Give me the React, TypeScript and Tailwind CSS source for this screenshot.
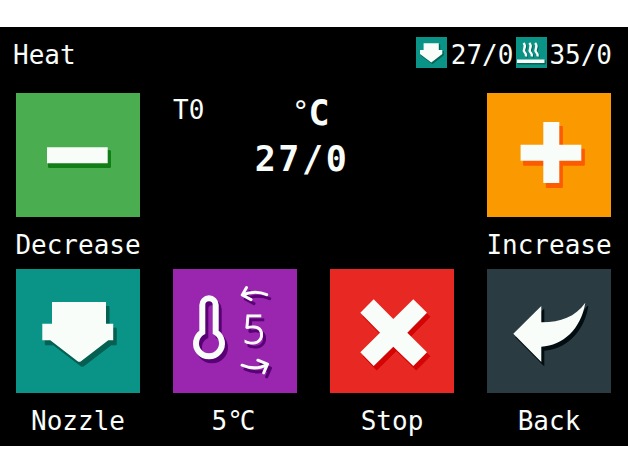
import type { ReactNode } from 'react';

const MONO = "font-['DejaVu_Sans_Mono','Liberation_Mono',monospace]";

function Shape({ d, shadow, dx = 3, dy = 4.5 }: { d: string; shadow: string; dx?: number; dy?: number }) {
  return (
    <>
      <path d={d} fill={shadow} stroke={shadow} strokeWidth="1" strokeLinejoin="round" transform={`translate(${dx} ${dy})`} />
      <path d={d} fill="#f8fdfa" />
    </>
  );
}

function Tile({ label, color, children }: { label: ReactNode; color: string; children: ReactNode }) {
  return (
    <button className="flex w-[124px] flex-col items-center">
      <svg viewBox="0 0 124 124" className={`block h-[124px] w-[124px] ${color}`}>
        {children}
      </svg>
      <span className="mt-[12px] h-[31px] whitespace-nowrap leading-[32px]">{label}</span>
    </button>
  );
}

function ThermometerArt() {
  return (
    <>
      <path d="M29.3 63.2V36A6.7 6.7 0 0 1 42.7 36V63.2A13 13 0 1 1 29.3 63.2Z" strokeWidth="6" />
      <g strokeWidth="3" strokeLinecap="round" strokeLinejoin="round">
        <path d="M73.5 18.6 69.3 26 78 30.6M69.3 26Q82 20.5 93.7 25.6" />
        <path d="M69 96.2Q83 102 94.5 95.2M84.8 91.2 94.5 95.2 90.7 103.8" />
      </g>
    </>
  );
}

function SmallNozzle() {
  return (
    <svg viewBox="0 0 31 31" className="h-[31px] w-[31px] bg-[#0a9488]">
      <Shape d="M7.6 6.3H22.8V13H26.3V17L15.3 25.4 4 17V13H7.6Z" shadow="#056355" dx={1} dy={1.3} />
    </svg>
  );
}

function SmallBed() {
  const waves = 'M7.5 6C11.5 10 6 12 8.5 15Q10.5 17 10 19.5M13.3 6C17.3 10 11.8 12 14.3 15Q16.3 17 15.8 19.5M19.1 6C23.1 10 17.6 12 20.1 15Q22.1 17 21.6 19.5';
  return (
    <svg viewBox="0 0 31 31" className="h-[31px] w-[31px] bg-[#0a9488]">
      <path d={waves} fill="none" stroke="#056355" strokeWidth="2.2" transform="translate(1 1)" />
      <path d={waves} fill="none" stroke="#f8fdfa" strokeWidth="2.4" />
      <Shape d="M1 22.5H28.5V26H1Z" shadow="#056355" dx={0.8} dy={1} />
    </svg>
  );
}

export default function App() {
  return (
    <div className={`flex h-[472px] w-[628px] flex-col bg-white text-[26px] text-[#f8fdfa] ${MONO}`}>
      <div className="mt-[27px] h-[419px] bg-black">
        <header className="flex h-[66px] items-start justify-between pl-[13px] pr-[16px] pt-[10px]">
          <h1 className="mt-[2px] leading-[32px]">Heat</h1>
          <div className="flex items-start">
            <SmallNozzle />
            <span className="ml-[3.5px] mr-[2.5px] mt-[2px] leading-[32px]">27/0</span>
            <SmallBed />
            <span className="ml-[2.5px] mt-[2px] leading-[32px]">35/0</span>
          </div>
        </header>
        <main className="ml-[16px] grid w-[595px] grid-cols-4 gap-x-[33px]">
          <Tile label="Decrease" color="bg-[#4aae51]">
            <rect x="32" y="57" width="63" height="18" rx="1.5" fill="#117e17" />
            <path d="M31 54.3H91.7V70.3H31Z" fill="#f8fdfa" />
          </Tile>
          <section className="col-span-2 flex items-start">
            <span className="mt-px w-[32px] leading-[32px]">T0</span>
            <div className="ml-[49px] flex w-[96px] flex-col items-center text-[35px] font-bold tracking-[2.6px]">
              <span className="ml-[20px] flex h-[45px] whitespace-nowrap leading-[40px]">
                <span className="text-[29px] font-normal leading-[36px] tracking-[-1px]">°</span>
                <span>C</span>
              </span>
              <span className="whitespace-nowrap leading-[42px]">27/0</span>
            </div>
          </section>
          <Tile label="Increase" color="bg-[#fa9a00]">
            <Shape d="M56.3 29H72.3V51.7H94.3V67.7H72.3V90H56.3V67.7H33.6V51.7H56.3Z" shadow="#fc5b00" />
          </Tile>
        </main>
        <footer className="ml-[16px] mt-[9px] grid w-[595px] grid-cols-4 gap-x-[33px]">
          <Tile label="Nozzle" color="bg-[#0a9488]">
            <Shape d="M36 33H90V54.7H97.2V71.3H92.3L65 92.2Q63.3 93.5 61.6 92.2L34.3 71.3H26.3V54.7H36Z" shadow="#056052" />
          </Tile>
          <Tile
            color="bg-[#9a26b0]"
            label={
              <>
                5<span className="tracking-[-3px]">°</span>
                <span className="tracking-[3px]">C</span>
              </>
            }
          >
            <g transform="translate(3 4)" fill="none" stroke="#580074">
              <ThermometerArt />
            </g>
            <g fill="none" stroke="#f8fdfa">
              <ThermometerArt />
            </g>
            <text x="69.3" y="75" fill="#f8fdfa" stroke="#f8fdfa" strokeWidth="0.9" className="font-['Open_Sans',sans-serif] text-[40px] font-light [filter:drop-shadow(3px_4px_0_#580074)]">5</text>
          </Tile>
          <Tile label="Stop" color="bg-[#e82822]">
            <Shape d="M30.3 43.7 43.7 30.3 63.3 50 83.3 30.3 97 43.7 77.3 63.7 97 83.3 83.3 97 63.3 77.7 43.7 97 30.3 83.3 50 63.7Z" shadow="#d40505" dy={4} />
          </Tile>
          <Tile label="Back" color="bg-[#2a3b41]">
            <Shape d="M26.3 64.7 54.3 37V53.3C73 53.5 88 48 98.3 33.7C94 60 76 76.5 54.3 77.7V93Z" shadow="#020d11" dx={2.5} dy={3.5} />
          </Tile>
        </footer>
      </div>
    </div>
  );
}
